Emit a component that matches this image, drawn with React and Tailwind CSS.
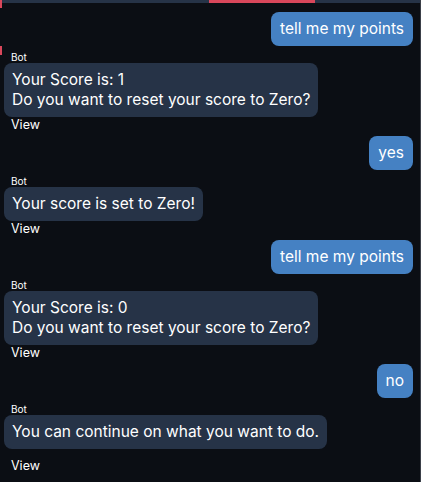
import React from 'react';

const messages = [
  { from: 'user', text: 'tell me my points' },
  { from: 'bot', lines: ['Your Score is: 1', 'Do you want to reset your score to Zero?'] },
  { from: 'user', text: 'yes' },
  { from: 'bot', lines: ['Your score is set to Zero!'] },
  { from: 'user', text: 'tell me my points' },
  { from: 'bot', lines: ['Your Score is: 0', 'Do you want to reset your score to Zero?'] },
  { from: 'user', text: 'no' },
  { from: 'bot', lines: ['You can continue on what you want to do.'], last: true },
];

const UserBubble = ({ text }) => (
  <div className="flex justify-end mb-[5px]">
    <div className="bg-[#4581c3] text-white text-[15.5px] leading-5 px-[9px] py-[7px] rounded-lg">
      {text}
    </div>
  </div>
);

const BotBubble = ({ lines, last }) => (
  <div className="flex flex-col items-start mb-[3px]">
    <div className="text-[10px] leading-3 text-white pl-[7px]">Bot</div>
    <div className="bg-[#263347] text-white text-[15.5px] leading-5 px-[8px] py-[7px] rounded-lg">
      {lines.map((l, i) => (
        <div key={i}>{l}</div>
      ))}
    </div>
    <div className={`text-[12.5px] leading-4 text-white pl-[7px] ${last ? 'mt-[9px]' : ''}`}>View</div>
  </div>
);

export default function App() {
  return (
    <div
      className="relative w-[421px] h-[482px] overflow-hidden bg-[#0b0e14] border-r border-[#3b4049]"
      style={{ fontFamily: 'Inter, "Noto Sans", sans-serif' }}
    >
      <div className="flex h-[3px]">
        <div className="w-[209px] bg-[#263347]" />
        <div className="w-[106px] bg-[#d9475b]" />
        <div className="flex-1 bg-[#263347]" />
      </div>
      <div className="absolute left-0 top-0 w-[2px] h-[8px] bg-[#d9475b]" />
      <div className="absolute left-0 top-[46px] w-[2px] h-[9px] bg-[#d9475b]" />

      <div className="pl-1 pr-[7px] pt-[9px]">
        {messages.map((m, i) =>
          m.from === 'user' ? (
            <UserBubble key={i} text={m.text} />
          ) : (
            <BotBubble key={i} lines={m.lines} last={m.last} />
          )
        )}
      </div>
    </div>
  );
}
